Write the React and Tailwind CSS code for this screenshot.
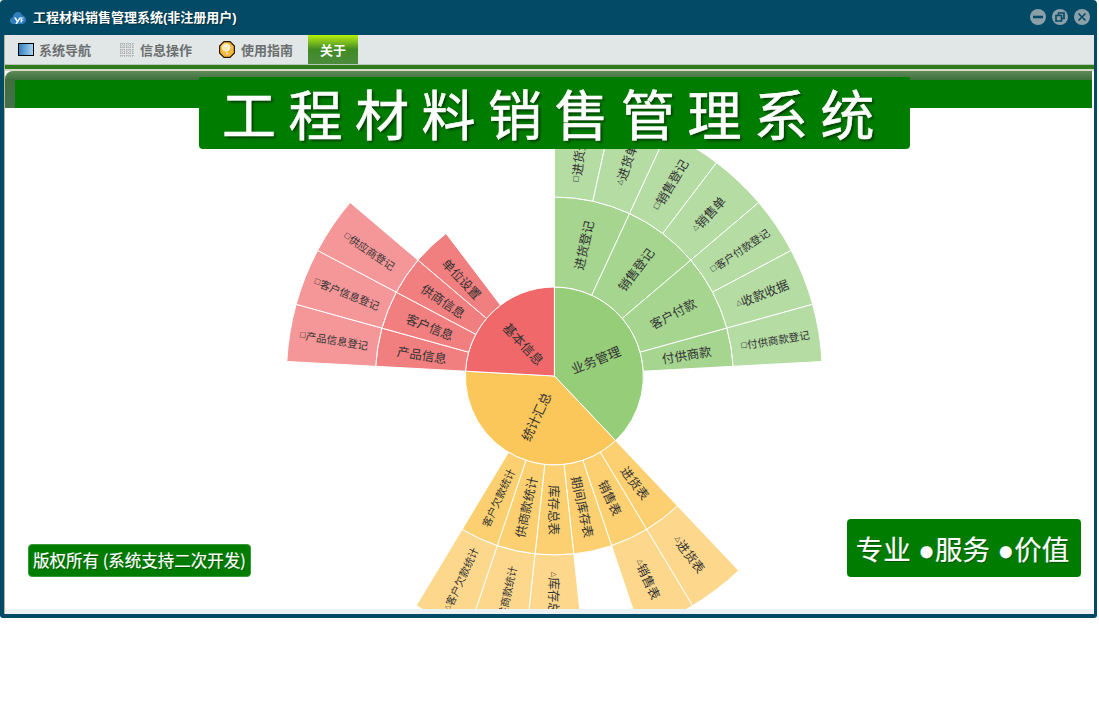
import React from "react";

const CX = 549.4;
const CY = 268;
const LEAF = 360 / 29;
const FONT = '"Noto Sans CJK SC", "Liberation Sans", sans-serif';
const LATIN_FIRST = '"Liberation Sans", "Noto Sans CJK SC", sans-serif';

const pt = (r, a) => {
  const t = (a * Math.PI) / 180;
  return [CX + r * Math.sin(t), CY - r * Math.cos(t)];
};

const sector = (r0, r1, a0, a1) => {
  const [x0, y0] = pt(r1, a0);
  const [x1, y1] = pt(r1, a1);
  const [x2, y2] = pt(r0, a1);
  const [x3, y3] = pt(r0, a0);
  const large = a1 - a0 > 180 ? 1 : 0;
  if (r0 === 0) return `M${CX} ${CY}L${x0} ${y0}A${r1} ${r1} 0 ${large} 1 ${x1} ${y1}Z`;
  return `M${x0} ${y0}A${r1} ${r1} 0 ${large} 1 ${x1} ${y1}L${x2} ${y2}A${r0} ${r0} 0 ${large} 0 ${x3} ${y3}Z`;
};

const groups = [
  {
    name: "业务管理", start: 0, span: 11, c: ["#95cd79", "#a5d58f", "#b4dca3"],
    kids: [
      { n: "进货登记", s: 0, w: 2 },
      { n: "销售登记", s: 2, w: 2 },
      { n: "客户付款", s: 4, w: 2 },
      { n: "付供商款", s: 6, w: 1 },
    ],
    leaves: [
      ["□", "进货登记", 12.500], ["△", "进货单", 12.500], ["□", "销售登记", 12.500], ["△", "销售单", 12.500],
      ["□", "客户付款登记", 10.500], ["△", "收款收据", 12.500], ["□", "付供商款登记", 10.500],
    ],
  },
  {
    name: "统计汇总", start: 11, span: 11, c: ["#fbc75a", "#fcd070", "#fdd88c"],
    kids: [
      { n: "进货表", s: 0, w: 1 },
      { n: "销售表", s: 1, w: 1 },
      { n: "期间库存表", s: 2, w: 1 },
      { n: "库存总表", s: 3, w: 1 },
      { n: "供商款统计", s: 4, w: 1 },
      { n: "客户欠款统计", s: 5, w: 1, f: 10.500 },
    ],
    leaves: [
      ["△", "进货表", 12.500], ["△", "销售表", 12.500], null, ["△", "库存总表", 12.500],
      ["△", "供商款统计", 10.500], ["△", "客户欠款统计", 10.500],
    ],
  },
  {
    name: "基本信息", start: 22, span: 7, c: ["#f0686a", "#f27f7f", "#f59798"],
    kids: [
      { n: "产品信息", s: 0, w: 1 },
      { n: "客户信息", s: 1, w: 1 },
      { n: "供商信息", s: 2, w: 1 },
      { n: "单位设置", s: 3, w: 1 },
    ],
    leaves: [
      ["□", "产品信息登记", 10.500], ["□", "客户信息登记", 10.500], ["□", "供应商登记", 10.500],
    ],
  },
];

function Label({ r, mid, icon, text, size = 12.500 }) {
  const [x, y] = pt(r, mid);
  const rot = mid < 180.5 ? mid - 90 : mid - 270;
  return (
    <text
      x={x}
      y={y}
      transform={`rotate(${rot} ${x} ${y})`}
      textAnchor="middle"
      dominantBaseline="central"
      fill="#333"
      fontSize={size}
      fontFamily={FONT}
    >
      {icon && (
        <tspan fontSize="7" fontFamily='"DejaVu Sans", sans-serif'>
          {icon}
        </tspan>
      )}
      {text}
    </text>
  );
}

function Sunburst() {
  const R = [89, 179, 268];
  return (
    <svg width="1086" height="501" viewBox="0 0 1086 501" className="block">
      {groups.map((g) => {
        const a0 = g.start * LEAF;
        const a1 = (g.start + g.span) * LEAF;
        return (
          <g key={g.name} stroke="#fff" strokeWidth="1">
            <path d={sector(0, R[0], a0, a1)} fill={g.c[0]} />
            {g.kids.map((k) => (
              <path
                key={k.n}
                d={sector(R[0], R[1], a0 + k.s * LEAF, a0 + (k.s + k.w) * LEAF)}
                fill={g.c[1]}
              />
            ))}
            {g.leaves.map((l, i) =>
              l ? (
                <path
                  key={i}
                  d={sector(R[1], R[2], a0 + i * LEAF, a0 + (i + 1) * LEAF)}
                  fill={g.c[2]}
                />
              ) : null
            )}
          </g>
        );
      })}
      {groups.map((g) => {
        const a0 = g.start * LEAF;
        const a1 = (g.start + g.span) * LEAF;
        return (
          <g key={g.name + "t"}>
            <Label r={44.500} mid={(a0 + a1) / 2} text={g.name} size={13} />
            {g.kids.map((k) => (
              <Label
                key={k.n}
                r={134}
                mid={a0 + (k.s + k.w / 2) * LEAF}
                text={k.n}
                size={k.f || 12.500}
              />
            ))}
            {g.leaves.map((l, i) =>
              l ? (
                <Label key={i} r={223.500} mid={a0 + (i + 0.5) * LEAF} icon={l[0]} text={l[1]} size={l[2]} />
              ) : null
            )}
          </g>
        );
      })}
    </svg>
  );
}

function LogoIcon() {
  return (
    <svg width="16" height="14" viewBox="0 0 16 14">
      <path d="M3.500 13C1.500 13 0 11.500 0 9.500C0 7.500 1.300 6.500 2.700 6.300C3.200 3 5.500 1 8 1C10 1 11.500 2 12 4C14.500 4.500 16 6.500 16 8.800C16 11.300 14 13 12 13Z" fill="#2f7fbf" />
      <path d="M4 6.500H6L7.500 9.500L9.300 6.500H11L7 13H5.300L6.700 10.800Z" fill="#fff" />
      <path d="M10.500 6.500H13.500V7.500H12V8.800H13.300V9.800H12V11.500H10.500Z" fill="#dfeef8" />
    </svg>
  );
}

function MonitorIcon() {
  return (
    <span className="block w-[16px] h-[13px] border border-black bg-gradient-to-r from-[#2f80c0] to-[#a8d4ee]" />
  );
}

function GridIcon() {
  return (
    <svg width="14" height="14" viewBox="0 0 14 14">
      {[1, 4, 7, 10, 13].map((v) => (
        <g key={v} stroke="#9a9a9a" strokeWidth="1">
          <path d={`M${v} 0V14`} strokeDasharray="1 1" />
          <path d={`M0 ${v}H14`} strokeDasharray="1 1" />
        </g>
      ))}
    </svg>
  );
}

function HelpIcon() {
  return (
    <svg width="16" height="17" viewBox="0 0 16 17">
      <path d="M5 .6H11L15.400 5V12L11 16.400H5L.6 12V5Z" fill="#f7b93a" stroke="#2a1500" strokeWidth="1.200" />
      <circle cx="7" cy="6.500" r="4.200" fill="#fdeaa8" />
      <path d="M5.500 6C6 4 10 4 10.500 6.200C10.800 8 8 8 8 10" fill="none" stroke="#eef0f2" strokeWidth="1.800" />
      <circle cx="8" cy="12.500" r="1.100" fill="#eef0f2" />
    </svg>
  );
}

function WinButton({ children }) {
  return (
    <span className="flex items-center justify-center w-[16px] h-[16px] rounded-full bg-[#8b9fa9]">
      <svg width="12" height="12" viewBox="0 0 12 12" fill="none" stroke="#024a66" strokeWidth="1.600">
        {children}
      </svg>
    </span>
  );
}

function Tab({ icon, label, gap }) {
  return (
    <div className={`flex items-center h-full ${gap}`}>
      {icon}
      <span className="text-[13px] font-bold text-[#6b6f70]" style={{ fontFamily: FONT }}>
        {label}
      </span>
    </div>
  );
}

export default function App() {
  return (
    <div className="w-[1099px] h-[723px] bg-white overflow-hidden" style={{ fontFamily: FONT }}>
      <div className="w-[1097px] h-[618px] bg-[#024a66] rounded-t-[4px] rounded-b-[3px] flex flex-col pl-[4px] pr-[3px] pb-[4px]">
        <div className="h-[35px] shrink-0 flex items-center pl-[6px] pr-[4px]">
          <LogoIcon />
          <span
            className="ml-[7px] text-[13px] font-bold text-white [text-shadow:1px_1px_1px_rgba(0,0,0,0.4)]"
            style={{ fontFamily: LATIN_FIRST }}
          >
            工程材料销售管理系统(非注册用户)
          </span>
          <div className="ml-auto flex items-center gap-[6px] pb-[1px]">
            <WinButton>
              <path d="M1 6H11" strokeWidth="2.600" />
            </WinButton>
            <WinButton>
              <path d="M2 4.500H7.500V10H2ZM4.500 4.500V2H10V7.500H7.500" />
            </WinButton>
            <WinButton>
              <path d="M2.500 2.500L9.500 9.500M9.500 2.500L2.500 9.500" />
            </WinButton>
          </div>
        </div>

        <div className="relative flex-1 min-h-0 flex flex-col bg-white border-l border-l-[#b5b58e]">
          <div className="h-[30px] shrink-0 bg-[#e1e6e6] border-b border-b-[#b9c6b4] flex items-center pl-[13px]">
            <div className="w-[87px] h-full">
              <Tab icon={<MonitorIcon />} label="系统导航" gap="gap-[5px]" />
            </div>
            <div className="w-[99px] ml-[15px] h-full">
              <Tab icon={<GridIcon />} label="信息操作" gap="gap-[6px]" />
            </div>
            <div className="w-[76px] h-full">
              <Tab icon={<HelpIcon />} label="使用指南" gap="gap-[6px]" />
            </div>
            <div className="ml-[13px] w-[50px] h-full flex items-center justify-center bg-gradient-to-b from-[#b7f000] via-[#3f8b22] to-[#4c8c3c] text-white text-[13px] font-bold">
              关于
            </div>
          </div>
          <div className="h-[4px] shrink-0 bg-[#2f7a1f]" />
          <div className="h-[2px] shrink-0 bg-[#d5d8c4]" />

          <div className="h-[37px] shrink-0 mr-[2px] rounded-tl-[8px] bg-gradient-to-b from-[#5d8a58] via-[#3f6f3f] via-25% to-[#44704a] pt-[9px] pl-[10px]">
            <div className="h-full bg-[#007d00]" />
          </div>

          <div className="relative flex-1 min-h-0 overflow-hidden bg-white">
            <Sunburst />
            <div className="absolute left-[23px] top-[436px] w-[223px] h-[33px] rounded-[4px] bg-[#007d00] border border-[#3a9a3a] flex items-center justify-center text-[16.5px] text-white whitespace-nowrap [text-shadow:1px_1px_1px_rgba(0,0,0,0.35)] [-webkit-text-stroke:0.2px_white]">
              版权所有 (系统支持二次开发)
            </div>
            <div
              className="absolute left-[842px] top-[411px] w-[234px] h-[58px] rounded-[4px] bg-[#007d00] flex items-center justify-center pt-[6px] pr-[3px] text-[27.5px] text-white whitespace-nowrap [text-shadow:1px_1px_1px_rgba(0,0,0,0.35)] [-webkit-text-stroke:0.2px_white]"
              style={{ fontFamily: LATIN_FIRST }}
            >
              专业 ●服务 ●价值
            </div>
          </div>
          <div className="h-[5px] shrink-0 bg-[#edf1f2]" />

          <div className="absolute left-[194px] top-[42px] w-[711px] h-[72px] rounded-b-[4px] rounded-t-[2px] bg-[#007d00] flex items-center justify-center text-[54px] leading-none text-white tracking-[12.5px] whitespace-nowrap [text-shadow:2px_2px_3px_rgba(0,0,0,0.55)] [-webkit-text-stroke:0.6px_white]">
            工程材料销售管理系统
          </div>
        </div>
      </div>
    </div>
  );
}
